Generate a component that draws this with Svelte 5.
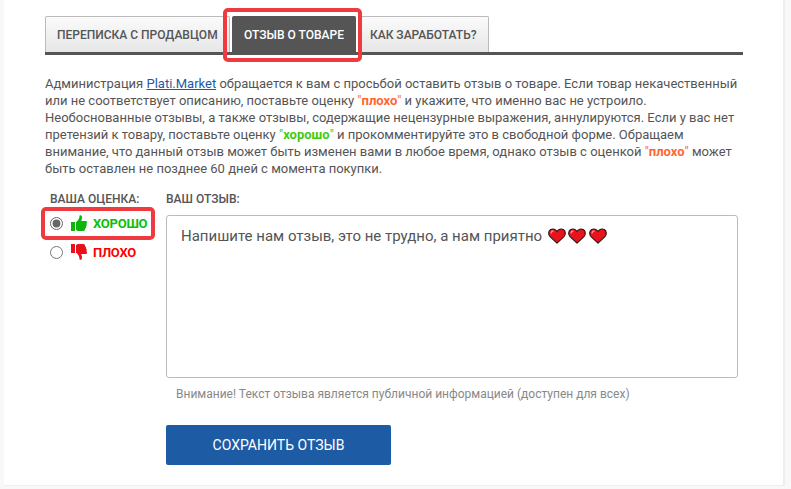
<script>
  const tabs = [
    { label: "Переписка с продавцом" },
    { label: "Отзыв о товаре", active: true },
    { label: "Как заработать?" }
  ];

  let rating = "good";
</script>

{#snippet heart()}
  <svg class="heart" viewBox="0 0 18 16" width="18" height="16">
    <path d="M9 15.2 L2 8.6 C0.2 6.8 0.2 3.4 2.4 1.8 C5 0.2 7.8 1.2 9 3.6 C10.2 1.2 13 0.2 15.6 1.8 C17.8 3.4 17.8 6.8 16 8.6 Z" fill="#e8141c" stroke="#2a1214" stroke-width="1.1" stroke-linejoin="round" />
    <path d="M3 5.5 C3 4 4 3 5.5 2.8" stroke="#ff8f8f" stroke-width="1.3" fill="none" />
  </svg>
{/snippet}

<div class="page">
  <div class="panel">
    <div class="tabs">
      {#each tabs as tab}
        <div class="tab" class:active={tab.active}>{tab.label}</div>
      {/each}
      <span class="mark mark-tab"></span>
    </div>

    <p class="intro">
      Администрация <a href="#top">Plati.Market</a> обращается к вам с просьбой оставить отзыв о товаре. Если товар некачественный<br />
      или не соответствует описанию, поставьте оценку <b class="bad">"<em>плохо</em>"</b> и укажите, что именно вас не устроило.<br />
      Необоснованные отзывы, а также отзывы, содержащие нецензурные выражения, аннулируются. Если у вас нет<br />
      претензий к товару, поставьте оценку <b class="good">"<em>хорошо</em>"</b> и прокомментируйте это в свободной форме. Обращаем<br />
      внимание, что данный отзыв может быть изменен вами в любое время, однако отзыв с оценкой <b class="bad">"<em>плохо</em>"</b> может<br />
      быть оставлен не позднее 60 дней с момента покупки.
    </p>

    <div class="form">
      <div class="rating">
        <div class="heading">Ваша оценка:</div>
        <label class="option good-option">
          <input type="radio" name="rating" value="good" bind:group={rating} />
          <svg viewBox="0 0 16 16" width="16" height="16">
            <path d="M0 7h4v9H0z M5 7.2 C7 6 8.4 3.6 8.6 0.6 C8.7 0 10.8 -0.2 11 2 C11.2 3.6 10.4 5 10.2 6 H14.6 C16.2 6 16.4 8.2 15.4 8.8 C16 9.8 15.8 11 15 11.4 C15.4 12.4 14.9 13.4 14 13.8 C14.2 15 13.4 16 12.2 16 H8 C6.8 16 5.8 15.4 5 15 Z" fill="#0bb50b" />
          </svg>
          <span>Хорошо</span>
        </label>
        <label class="option bad-option">
          <input type="radio" name="rating" value="bad" bind:group={rating} />
          <svg viewBox="0 0 16 16" width="16" height="16">
            <path d="M0 0h4v9H0z M5 8.8 C7 10 8.4 12.4 8.6 15.4 C8.7 16 10.8 16.2 11 14 C11.2 12.4 10.4 11 10.2 10 H14.6 C16.2 10 16.4 7.8 15.4 7.2 C16 6.2 15.8 5 15 4.6 C15.4 3.6 14.9 2.6 14 2.2 C14.2 1 13.4 0 12.2 0 H8 C6.8 0 5.8 0.6 5 1 Z" fill="#e8101c" />
          </svg>
          <span>Плохо</span>
        </label>
        <span class="mark mark-good"></span>
      </div>

      <div class="review">
        <div class="heading">Ваш отзыв:</div>
        <div class="textarea">
          Напишите нам отзыв, это не трудно, а нам приятно
          <span class="hearts">{@render heart()}{@render heart()}{@render heart()}</span>
        </div>
        <p class="hint">Внимание! Текст отзыва является публичной информацией (доступен для всех)</p>
        <button type="button">Сохранить отзыв</button>
      </div>
    </div>
  </div>
</div>

<style>
  :global(body) {
    margin: 0;
    background: #f8f8f8;
    font-family: Roboto, "Liberation Sans", sans-serif;
    color: #555;
  }

  .page {
    height: 489px;
    padding: 0 6px 3px 4px;
    box-sizing: border-box;
    overflow: hidden;
  }

  .panel {
    height: 100%;
    box-sizing: border-box;
    background: #fff;
    padding: 16px 40px 0 41px;
    border-right: 2px solid #eee;
    border-bottom: 1px solid #eee;
  }

  .tabs {
    position: relative;
    display: flex;
    gap: 2px;
    height: 36px;
    border-bottom: 3px solid #555;
  }

  .tab {
    box-sizing: border-box;
    height: 36px;
    padding: 0 11px;
    line-height: 36px;
    font-size: 12px;
    font-weight: 500;
    text-transform: uppercase;
    color: #555;
    border: 1px solid #bbb;
    border-bottom: 0;
    border-radius: 2px 2px 0 0;
    background: linear-gradient(#fbfbfb, #e6e6e6);
  }

  .tab.active {
    margin-left: 0.4px;
    color: #fff;
    background: #555;
    border-color: #555;
  }

  .mark {
    position: absolute;
    box-sizing: border-box;
    border: 4px solid #ef3b3f;
    border-radius: 5px;
    pointer-events: none;
  }

  .mark-tab {
    left: 178px;
    top: -8px;
    width: 139px;
    height: 54px;
  }

  .intro {
    margin: 20px 0 0;
    font-size: 13px;
    line-height: 17px;
    white-space: nowrap;
  }

  .intro a {
    color: #1d5ba5;
  }

  .intro b {
    font-weight: 400;
  }

  .intro em {
    font-style: normal;
    font-weight: 700;
  }

  .bad {
    color: #ff6633;
  }

  .good {
    color: #44cc11;
  }

  .form {
    display: flex;
    margin-top: 14px;
  }

  .rating {
    position: relative;
    flex: none;
    width: 121px;
    padding-left: 5px;
    box-sizing: border-box;
  }

  .heading {
    font-size: 12px;
    font-weight: 500;
    line-height: 16px;
    text-transform: uppercase;
    color: #555;
  }

  .option {
    display: flex;
    align-items: center;
    height: 22px;
    font-size: 13px;
    font-weight: 700;
    letter-spacing: -0.25px;
    text-transform: uppercase;
  }

  .good-option {
    margin-top: 5px;
    color: #0bbf0b;
  }

  .bad-option {
    margin-top: 7px;
    color: #f00;
  }

  .option input {
    margin: 0 8px 0 0;
    width: 13px;
    height: 13px;
    accent-color: #666;
  }

  .option span {
    margin-left: 6px;
  }

  .mark-good {
    left: -4px;
    top: 16px;
    width: 114px;
    height: 33px;
  }

  .review {
    flex: none;
    width: 572px;
  }

  .textarea {
    margin-top: 8px;
    box-sizing: border-box;
    height: 163px;
    padding: 10px 14px;
    border: 1px solid #bbb;
    border-radius: 3px;
    font-size: 15px;
    line-height: 20px;
    color: #555;
    background: #fff;
  }

  .hearts {
    display: inline-flex;
    gap: 2.5px;
    margin-left: 2px;
    vertical-align: -3px;
  }

  .hint {
    margin: 8px 0 0 10px;
    font-size: 12px;
    line-height: 16px;
    color: #888;
  }

  button {
    display: block;
    margin-top: 23px;
    width: 225px;
    height: 40px;
    border: 0;
    border-radius: 2px;
    background: #1d5ba5;
    color: #fff;
    font-family: inherit;
    font-size: 14px;
    text-transform: uppercase;
  }
</style>
